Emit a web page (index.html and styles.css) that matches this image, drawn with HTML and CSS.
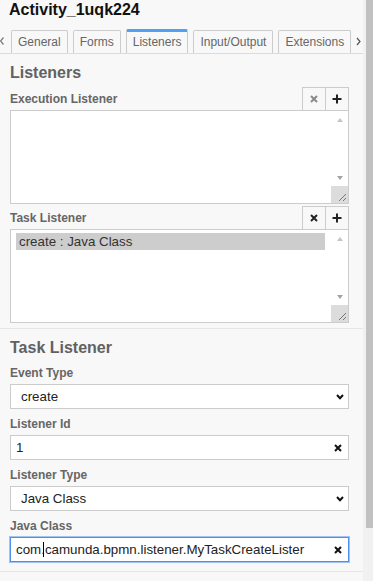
FILE: index.html
```html
<!DOCTYPE html>
<html lang="en">
<head>
    <meta charset="UTF-8">
    <meta name="viewport" content="width=device-width, initial-scale=1.0">
    <title>Properties - Activity_1uqk224</title>
    <link rel="stylesheet" href="styles.css">
</head>
<body>
    <div class="layout">
        <div class="panel">
            <h1 class="panel-title">Activity_1uqk224</h1>

            <div class="tabs">
                <span class="tab-scroll tab-scroll-left">
                    <svg width="4" height="8" viewBox="0 0 4 8"><path d="M3.5 0.5 L0.5 4 L3.5 7.5" fill="none" stroke="#777" stroke-width="1.2"/></svg>
                </span>
                <div class="tab-list">
                    <div class="tab">General</div>
                    <div class="tab">Forms</div>
                    <div class="tab active">Listeners</div>
                    <div class="tab">Input/Output</div>
                    <div class="tab">Extensions</div>
                </div>
                <span class="tab-scroll tab-scroll-right">
                    <svg width="5" height="9" viewBox="0 0 5 9"><path d="M1 1 L4 4.5 L1 8" fill="none" stroke="#555" stroke-width="1.2"/></svg>
                </span>
            </div>

            <div class="group">
                <h2 class="group-title">Listeners</h2>

                <div class="list-header">
                    <label>Execution Listener</label>
                    <div class="list-actions">
                        <button class="action-btn disabled" type="button">
                            <svg width="8" height="8" viewBox="0 0 8 8"><path d="M1 1 L7 7 M7 1 L1 7" stroke="#8a8a8a" stroke-width="2"/></svg>
                        </button>
                        <button class="action-btn" type="button">
                            <svg width="10" height="10" viewBox="0 0 10 10"><path d="M5 0.5 V9.5 M0.5 5 H9.5" stroke="#222" stroke-width="2"/></svg>
                        </button>
                    </div>
                </div>
                <div class="listbox">
                    <div class="listbox-items"></div>
                    <div class="listbox-scroll">
                        <span class="scroll-arrow up light"></span>
                        <span class="scroll-space"></span>
                        <span class="scroll-arrow down"></span>
                        <span class="scroll-corner">
                            <svg width="9" height="9" viewBox="0 0 9 9"><path d="M8 1 L1 8 M8 5 L5 8" stroke="#777" stroke-width="1"/></svg>
                        </span>
                    </div>
                </div>

                <div class="list-header second">
                    <label>Task Listener</label>
                    <div class="list-actions">
                        <button class="action-btn" type="button">
                            <svg width="8" height="8" viewBox="0 0 8 8"><path d="M1 1 L7 7 M7 1 L1 7" stroke="#222" stroke-width="2"/></svg>
                        </button>
                        <button class="action-btn" type="button">
                            <svg width="10" height="10" viewBox="0 0 10 10"><path d="M5 0.5 V9.5 M0.5 5 H9.5" stroke="#222" stroke-width="2"/></svg>
                        </button>
                    </div>
                </div>
                <div class="listbox">
                    <div class="listbox-items">
                        <div class="listbox-item selected">create : Java Class</div>
                    </div>
                    <div class="listbox-scroll">
                        <span class="scroll-arrow up light"></span>
                        <span class="scroll-space"></span>
                        <span class="scroll-arrow down"></span>
                        <span class="scroll-corner">
                            <svg width="9" height="9" viewBox="0 0 9 9"><path d="M8 1 L1 8 M8 5 L5 8" stroke="#777" stroke-width="1"/></svg>
                        </span>
                    </div>
                </div>
            </div>

            <div class="group">
                <h2 class="group-title">Task Listener</h2>

                <div class="field">
                    <label for="event-type">Event Type</label>
                    <div class="control-wrap">
                        <select id="event-type" class="control">
                            <option>create</option>
                        </select>
                        <svg class="chevron" width="8" height="6" viewBox="0 0 8 6"><path d="M1 1 L4 4.2 L7 1" fill="none" stroke="#111" stroke-width="2"/></svg>
                    </div>
                </div>

                <div class="field">
                    <label for="listener-id">Listener Id</label>
                    <div class="control-wrap">
                        <input id="listener-id" class="control" type="text" value="1">
                        <svg class="clear" width="8" height="8" viewBox="0 0 8 8"><path d="M1 1 L7 7 M7 1 L1 7" stroke="#111" stroke-width="2"/></svg>
                    </div>
                </div>

                <div class="field">
                    <label for="listener-type">Listener Type</label>
                    <div class="control-wrap">
                        <select id="listener-type" class="control">
                            <option>Java Class</option>
                        </select>
                        <svg class="chevron" width="8" height="6" viewBox="0 0 8 6"><path d="M1 1 L4 4.2 L7 1" fill="none" stroke="#111" stroke-width="2"/></svg>
                    </div>
                </div>

                <div class="field">
                    <label for="java-class">Java Class</label>
                    <div class="control-wrap">
                        <input id="java-class" class="control focused" type="text" value="com.camunda.bpmn.listener.MyTaskCreateLister">
                        <span class="caret"></span>
                        <svg class="clear" width="8" height="8" viewBox="0 0 8 8"><path d="M1 1 L7 7 M7 1 L1 7" stroke="#111" stroke-width="2"/></svg>
                    </div>
                </div>
            </div>
        </div>

        <div class="page-scrollbar">
            <div class="page-scrollbar-thumb"></div>
        </div>
    </div>
</body>
</html>
```

FILE: styles.css
```css
* {
    margin: 0;
    padding: 0;
    box-sizing: border-box;
    font-family: 'Liberation Sans', Arial, sans-serif;
}

body {
    background: #f8f8f8;
    overflow: hidden;
}

.layout {
    display: flex;
    height: 581px;
}

.panel {
    width: 363px;
    background: #f8f8f8;
}

.panel-title {
    padding: 1px 9px 0;
    font-size: 16px;
    line-height: 18px;
    font-weight: bold;
    color: #111;
}

/* tabs */
.tabs {
    display: flex;
    align-items: flex-end;
    height: 25px;
    margin-top: 10px;
    border-bottom: 1px solid #dcdcdc;
}

.tab-scroll {
    align-self: center;
    display: flex;
    align-items: center;
    height: 24px;
}

.tab-scroll-left {
    width: 11px;
}

.tab-scroll-right {
    width: 12px;
    padding-left: 5px;
}

.tab-list {
    flex: 1;
    display: flex;
    align-items: flex-end;
    gap: 5px;
    overflow: hidden;
    height: 24px;
}

.tab {
    flex-shrink: 0;
    height: 23px;
    padding: 0 6px;
    border: 1px solid #ccc;
    border-bottom: none;
    border-radius: 2px 2px 0 0;
    background: #f8f8f8;
    color: #666;
    font-size: 12px;
    line-height: 22px;
}

.tab.active {
    height: 24px;
    border-top: 3px solid #52a0f2;
    line-height: 21px;
}

/* groups */
.group {
    padding: 9px 14px 5px 10px;
    border-bottom: 1px solid #e6e6e6;
}

.group + .group {
    padding-bottom: 9px;
}

.group-title {
    font-size: 16px;
    line-height: 20px;
    font-weight: bold;
    color: #616161;
}

label {
    font-size: 12px;
    line-height: 16px;
    font-weight: bold;
    color: #666;
}

.list-header {
    display: flex;
    align-items: center;
    justify-content: space-between;
    height: 24px;
    margin-top: 4px;
}

.list-header.second {
    margin-top: 2px;
}

.list-actions {
    display: flex;
}

.action-btn {
    display: flex;
    align-items: center;
    justify-content: center;
    width: 24px;
    height: 24px;
    border: 1px solid #ccc;
    background: #f8f8f8;
}

.action-btn + .action-btn {
    margin-left: -1px;
}

.listbox {
    display: flex;
    height: 94px;
    margin-top: -1px;
    border: 1px solid #ccc;
    background: #fff;
}

.listbox-items {
    flex: 1;
    padding: 3px 6px 0 5px;
}

.listbox-item {
    height: 17px;
    padding-left: 3px;
    font-size: 13.33px;
    line-height: 17px;
    color: #333;
}

.listbox-item.selected {
    background: #cdcdcd;
}

.listbox-scroll {
    width: 17px;
    display: flex;
    flex-direction: column;
    background: #fff;
}

.scroll-arrow {
    height: 17px;
    display: flex;
    align-items: center;
    justify-content: center;
}

.scroll-arrow::before {
    content: '';
    border-left: 3.5px solid transparent;
    border-right: 3.5px solid transparent;
}

.scroll-arrow.up::before {
    border-bottom: 4px solid #a3a3a3;
}

.scroll-arrow.up.light::before {
    border-bottom-color: #c4c4c4;
}

.scroll-arrow.down::before {
    border-top: 4px solid #a3a3a3;
}

.scroll-space {
    flex: 1;
}

.scroll-corner {
    height: 17px;
    display: flex;
    align-items: flex-end;
    justify-content: flex-end;
    padding: 0 1px 1px 0;
    background: #dcdcdc;
}

/* form fields */
.field {
    margin-top: 7px;
}

.field label {
    display: block;
    margin-bottom: 3px;
}

.control-wrap {
    position: relative;
}

.control {
    display: block;
    width: 100%;
    height: 25px;
    border: 1px solid #ccc;
    border-radius: 0;
    background: #fff;
    color: #222;
    font-size: 13.33px;
    outline: none;
}

select.control {
    appearance: none;
    padding: 0 24px 0 10px;
}

input.control {
    padding: 0 24px 0 5px;
}

.control.focused {
    border-color: #4d8ff0;
    box-shadow: 0 0 0 1px #a3c3f3;
}

.chevron {
    position: absolute;
    right: 5px;
    top: 10px;
}

.clear {
    position: absolute;
    right: 7px;
    top: 9px;
}

.caret {
    position: absolute;
    left: 33px;
    top: 5px;
    width: 1px;
    height: 15px;
    background: #000;
}

/* page scrollbar */
.page-scrollbar {
    width: 10px;
    background: #f1f1f1;
}

.page-scrollbar-thumb {
    width: 7px;
    height: 528px;
    margin-left: 3px;
    background: #c1c1c1;
}
```
